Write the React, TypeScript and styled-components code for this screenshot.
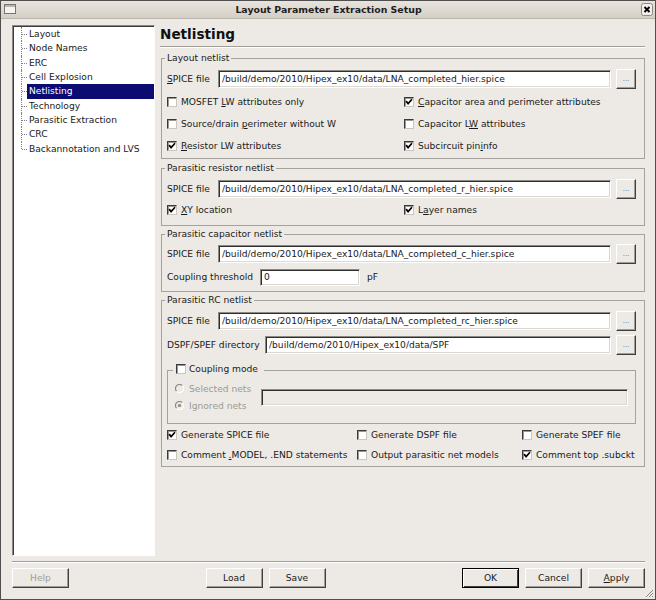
import React from 'react';
import styled, { createGlobalStyle } from 'styled-components';

const BG = '#edeae5';
const FONT = `'DejaVu Sans', 'Liberation Sans', sans-serif`;

const GlobalStyle = createGlobalStyle`
  html, body {
    margin: 0;
    padding: 0;
    background: ${BG};
  }
  body {
    font-family: ${FONT};
  }
`;

const Window = styled.div`
  position: relative;
  width: 656px;
  height: 600px;
  box-sizing: border-box;
  border: 1px solid #4e4e4e;
  background: ${BG};
  font-family: ${FONT};
  font-size: 9.15px;
  color: #1a1a1a;
  display: flex;
  flex-direction: column;
  overflow: hidden;
`;

const TitleBar = styled.div`
  height: 18px;
  flex: none;
  display: flex;
  align-items: flex-start;
  background: linear-gradient(#e8e4dd, #d4cfc6);
  border-bottom: 1px solid #bdb8af;
  box-sizing: border-box;
`;

const WinIcon = styled.svg`
  margin: 3px 0 0 3px;
  flex: none;
`;

const TitleText = styled.div`
  flex: 1;
  text-align: center;
  font-weight: bold;
  font-size: 9.4px;
  line-height: 17px;
  color: #1e1e1e;
`;

const CloseBox = styled.svg`
  margin: 2px 2px 0 0;
  flex: none;
`;

const Body = styled.div`
  flex: 1;
  display: flex;
  flex-direction: column;
  padding: 5px 10px 0 11px;
`;

const Main = styled.div`
  display: flex;
  align-items: flex-start;
  gap: 5px;
  height: 532px;
`;

const TreePanel = styled.div`
  width: 143px;
  height: 531px;
  margin-top: 1px;
  flex: none;
  box-sizing: border-box;
  background: #fff;
  border: 1px solid;
  border-color: #8a8781 #fff #fff #8a8781;
  box-shadow: inset 1px 1px 0 #3d3c3a;
  padding: 1px 0 0 14px;
`;

const TreeItem = styled.div<{ $selected?: boolean; $last?: boolean }>`
  position: relative;
  height: 14.33px;
  line-height: 14.33px;
  padding-left: 2px;
  white-space: nowrap;
  color: ${(p) => (p.$selected ? '#fff' : '#1a1a1a')};
  background: ${(p) => (p.$selected ? '#0b0b72' : 'transparent')};

  &::before {
    content: '';
    position: absolute;
    left: -5px;
    top: 7px;
    width: 5px;
    border-top: 1px dotted #808080;
  }

  &::after {
    content: '';
    position: absolute;
    left: -6px;
    top: 0;
    height: ${(p) => (p.$last ? '7px' : '100%')};
    border-left: 1px dotted #808080;
  }
`;

const Content = styled.div`
  flex: 1;
  display: flex;
  flex-direction: column;
`;

const Heading = styled.h1`
  margin: 0;
  font-size: 13.6px;
  line-height: 20px;
  font-weight: bold;
  color: #111;
`;

const Separator = styled.div<{ $mt: number }>`
  margin-top: ${(p) => p.$mt}px;
  border-top: 1px solid #a19e98;
  border-bottom: 1px solid #fff;
`;

const Group = styled.fieldset<{ $mt: number; $pt: number; $pb: number }>`
  margin: ${(p) => p.$mt}px 0 0 1px;
  padding: ${(p) => p.$pt}px 8px ${(p) => p.$pb}px 5px;
  border: 1px solid #a5a29d;
  min-width: 0;
`;

const Legend = styled.legend`
  padding: 0 2px;
  margin-left: -2px;
  line-height: 11px;
  font-size: 9.15px;
`;

const InnerGroup = styled.fieldset`
  margin: 8px 0 0 0;
  padding: 3px 7px 9px 7px;
  border: 1px solid #a5a29d;
  min-width: 0;
  display: flex;
  align-items: center;
`;

const InnerLegend = styled.legend`
  padding: 0 6px 0 3px;
  margin-left: -2px;
  line-height: 12px;
`;

const Row = styled.div<{ $mt?: number }>`
  display: flex;
  align-items: center;
  height: 20px;
  margin-top: ${(p) => p.$mt ?? 0}px;
`;

const Label = styled.span<{ $w: number }>`
  flex: none;
  width: ${(p) => p.$w}px;
  white-space: nowrap;
`;

const Field = styled.input<{ $w?: number; $h?: number; $disabled?: boolean }>`
  flex: ${(p) => (p.$w ? 'none' : '1')};
  width: ${(p) => (p.$w ? `${p.$w}px` : 'auto')};
  min-width: 0;
  height: ${(p) => p.$h ?? 18}px;
  box-sizing: border-box;
  margin: 0;
  padding: 0 3px;
  font: inherit;
  color: #1a1a1a;
  background: ${(p) => (p.$disabled ? BG : '#fff')};
  border: 1px solid;
  border-color: #8d8a85 #fff #fff #8d8a85;
  box-shadow: inset 1px 1px 0 #2e2e2e, inset -1px -1px 0 #dcd9d3;
  outline: none;
`;

const BrowseButton = styled.button`
  flex: none;
  width: 20px;
  height: 20px;
  margin: 0 0 0 5px;
  padding: 0;
  box-sizing: border-box;
  background: ${BG};
  border: 1px solid;
  border-color: #fff #3f3f3f #3f3f3f #fff;
  box-shadow: inset -1px -1px 0 #a09d98;
  font-family: ${FONT};
  font-size: 7px;
  line-height: 18px;
  color: #6b6966;
`;

const CheckGrid = styled.div<{ $cols: string; $row: number; $mt?: number }>`
  display: grid;
  grid-template-columns: ${(p) => p.$cols};
  grid-auto-rows: ${(p) => p.$row}px;
  margin-top: ${(p) => p.$mt ?? 0}px;
`;

const CheckLabel = styled.label<{ $gap?: number }>`
  display: inline-flex;
  align-items: center;
  gap: ${(p) => p.$gap ?? 4}px;
  white-space: nowrap;
`;

const Box = styled.span`
  flex: none;
  width: 10px;
  height: 10px;
  box-sizing: border-box;
  background: #fff;
  border: 1px solid;
  border-color: #3a3a3a #c9c6c0 #c9c6c0 #3a3a3a;
  box-shadow: inset 1px 1px 0 #9a9893;
  display: flex;
  align-items: center;
  justify-content: center;
`;

const RadioCol = styled.div`
  flex: none;
  width: 86px;
  display: flex;
  flex-direction: column;
`;

const RadioRow = styled.div`
  height: 17px;
  display: flex;
  align-items: center;
  gap: 5px;
  color: #9c9a96;
`;

const Unit = styled.span`
  margin-left: 7px;
  color: #1a1a1a;
`;

const ButtonBar = styled.div`
  margin-top: 5px;
  display: flex;
  justify-content: space-between;
`;

const ButtonGroup = styled.div`
  display: flex;
  gap: 6px;
`;

const PushButton = styled.button<{ $default?: boolean }>`
  width: 57px;
  height: 20px;
  margin: 0;
  padding: 0;
  box-sizing: border-box;
  background: ${BG};
  font-family: ${FONT};
  font-size: 9.15px;
  color: ${(p) => (p.disabled ? '#a09d98' : '#1a1a1a')};
  border: 1px solid;
  border-color: ${(p) => (p.$default ? '#000' : '#fff #3f3f3f #3f3f3f #fff')};
  box-shadow: ${(p) =>
    p.$default
      ? 'inset 1px 1px 0 #fff, inset -1px -1px 0 #3f3f3f'
      : 'inset -1px -1px 0 #a09d98'};
`;

const Grip = styled.svg`
  position: absolute;
  right: 1px;
  bottom: 1px;
`;

const Check = ({
  checked,
  gap,
  children,
}: {
  checked?: boolean;
  gap?: number;
  children: React.ReactNode;
}) => (
  <CheckLabel $gap={gap}>
    <Box>
      {checked && (
        <svg width="8" height="8" viewBox="0 0 8 8">
          <path d="M1.1 3.1 L3.1 5.6 L7 1.3" fill="none" stroke="#000" strokeWidth="1.7" />
        </svg>
      )}
    </Box>
    <span>{children}</span>
  </CheckLabel>
);

const Radio = ({ checked }: { checked?: boolean }) => (
  <svg width="9" height="9" viewBox="0 0 10 10">
    <path d="M8.2 1.8 A4.5 4.5 0 0 0 1.8 8.2" fill="none" stroke="#8c8a86" strokeWidth="1.3" />
    <path d="M1.8 8.2 A4.5 4.5 0 0 0 8.2 1.8" fill="none" stroke="#fff" strokeWidth="1.3" />
    {checked && <circle cx="5" cy="5" r="1.8" fill="#8c8a86" />}
  </svg>
);

const FileRow = ({
  label,
  width,
  value,
  mt,
}: {
  label: React.ReactNode;
  width: number;
  value: string;
  mt?: number;
}) => (
  <Row $mt={mt}>
    <Label $w={width}>{label}</Label>
    <Field readOnly value={value} />
    <BrowseButton>...</BrowseButton>
  </Row>
);

const treeItems = [
  'Layout',
  'Node Names',
  'ERC',
  'Cell Explosion',
  'Netlisting',
  'Technology',
  'Parasitic Extraction',
  'CRC',
  'Backannotation and LVS',
];

const base = '/build/demo/2010/Hipex_ex10/data/';

const App = (): JSX.Element => (
  <>
    <GlobalStyle />
    <Window>
      <TitleBar>
        <WinIcon width="12" height="10" viewBox="0 0 12 10">
          <rect x="0.5" y="0.5" width="11" height="9" fill="#f6f4f0" stroke="#77756f" />
          <rect x="1" y="1" width="10" height="2" fill="#b9b5ad" />
        </WinIcon>
        <TitleText>Layout Parameter Extraction Setup</TitleText>
        <CloseBox width="12" height="13" viewBox="0 0 12 13">
          <rect x="0.5" y="0.5" width="11" height="12" rx="2" fill="#f1efeb" stroke="#8d8982" />
          <path d="M3.5 4 L8.5 9 M8.5 4 L3.5 9" stroke="#000" strokeWidth="1.9" />
        </CloseBox>
      </TitleBar>

      <Body>
        <Main>
          <TreePanel>
            {treeItems.map((name, i) => (
              <TreeItem
                key={name}
                $selected={name === 'Netlisting'}
                $last={i === treeItems.length - 1}
              >
                {name}
              </TreeItem>
            ))}
          </TreePanel>

          <Content>
            <Heading>Netlisting</Heading>
            <Separator $mt={2} />

            <Group $mt={5} $pt={5} $pb={1}>
              <Legend>Layout netlist</Legend>
              <FileRow
                label={
                  <>
                    <u>S</u>PICE file
                  </>
                }
                width={51}
                value={`${base}LNA_completed_hier.spice`}
              />
              <CheckGrid $cols="237px 1fr" $row={22} $mt={2}>
                <Check>
                  MOSFET <u>L</u>W attributes only
                </Check>
                <Check checked>
                  <u>C</u>apacitor area and perimeter attributes
                </Check>
                <Check>
                  Source/drain <u>p</u>erimeter without W
                </Check>
                <Check>
                  Capacitor L<u>W</u> attributes
                </Check>
                <Check checked>
                  <u>R</u>esistor LW attributes
                </Check>
                <Check checked>
                  Subcircuit pin<u>i</u>nfo
                </Check>
              </CheckGrid>
            </Group>

            <Group $mt={4} $pt={5} $pb={4}>
              <Legend>Parasitic resistor netlist</Legend>
              <FileRow label="SPICE file" width={51} value={`${base}LNA_completed_r_hier.spice`} />
              <CheckGrid $cols="237px 1fr" $row={22}>
                <Check checked>
                  <u>X</u>Y location
                </Check>
                <Check checked>
                  L<u>a</u>yer names
                </Check>
              </CheckGrid>
            </Group>

            <Group $mt={3} $pt={4} $pb={4}>
              <Legend>Parasitic capacitor netlist</Legend>
              <FileRow label="SPICE file" width={51} value={`${base}LNA_completed_c_hier.spice`} />
              <Row $mt={3}>
                <Label $w={93}>Coupling threshold</Label>
                <Field readOnly value="0" $w={100} $h={17} />
                <Unit>pF</Unit>
              </Row>
            </Group>

            <Group $mt={3} $pt={5} $pb={1}>
              <Legend>Parasitic RC netlist</Legend>
              <FileRow label="SPICE file" width={51} value={`${base}LNA_completed_rc_hier.spice`} />
              <FileRow
                label="DSPF/SPEF directory"
                width={98}
                value={`${base}SPF`}
                mt={4}
              />
              <InnerGroup>
                <InnerLegend>
                  <Check gap={3}>Coupling mode</Check>
                </InnerLegend>
                <RadioCol>
                  <RadioRow>
                    <Radio />
                    Selected nets
                  </RadioRow>
                  <RadioRow>
                    <Radio checked />
                    Ignored nets
                  </RadioRow>
                </RadioCol>
                <Field readOnly value="" $h={17} $disabled />
              </InnerGroup>
              <CheckGrid $cols="190px 165px 1fr" $row={20} $mt={1}>
                <Check checked>Generate SPICE file</Check>
                <Check>Generate DSPF file</Check>
                <Check>Generate SPEF file</Check>
                <Check>
                  Comment <u>.</u>MODEL, .END statements
                </Check>
                <Check>Output parasitic net models</Check>
                <Check checked>Comment top .subckt</Check>
              </CheckGrid>
            </Group>
          </Content>
        </Main>

        <Separator $mt={5} />

        <ButtonBar>
          <ButtonGroup>
            <PushButton disabled>Help</PushButton>
          </ButtonGroup>
          <ButtonGroup>
            <PushButton>Load</PushButton>
            <PushButton>Save</PushButton>
          </ButtonGroup>
          <ButtonGroup>
            <PushButton $default>OK</PushButton>
            <PushButton>Cancel</PushButton>
            <PushButton>
              <u>A</u>pply
            </PushButton>
          </ButtonGroup>
        </ButtonBar>
      </Body>

      <Grip width="10" height="10" viewBox="0 0 10 10">
        <path d="M9 2 L2 9 M9 5 L5 9 M9 8 L8 9" stroke="#8d8a85" strokeWidth="1" />
      </Grip>
    </Window>
  </>
);

export default App;
